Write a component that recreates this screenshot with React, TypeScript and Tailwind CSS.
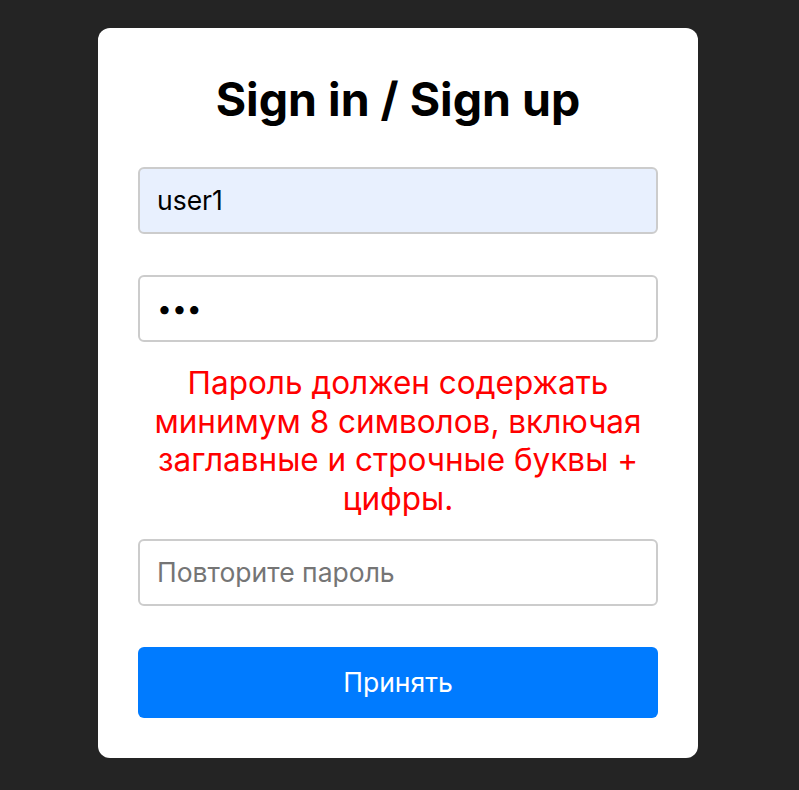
export default function App() {
  return (
    <div className="min-h-[790px] w-full bg-[#242424] pt-[28px] pr-[3px] flex justify-center" style={{ fontFamily: "Inter, 'Noto Sans', sans-serif" }}>
      <div className="w-[600px] h-[730px] bg-white rounded-[12px] px-[40px] pt-[40px] flex flex-col">
        <h1 className="text-[46.5px] leading-[62px] font-bold text-black text-center">Sign in / Sign up</h1>
        <div className="mt-[37px] h-[67px] rounded-[6px] border-2 border-[#cccccc] bg-[#e8f0fe] flex items-center px-[17px] text-[26.5px] text-black">user1</div>
        <div className="mt-[41px] h-[67px] rounded-[6px] border-2 border-[#cccccc] bg-white flex items-center px-[17px] text-[26.5px] text-black">•••</div>
        <p className="mt-[22px] text-[31.5px] leading-[38.5px] text-[#ff0000] text-center">
          Пароль должен содержать минимум 8 символов, включая заглавные и строчные буквы + цифры.
        </p>
        <div className="mt-[21px] h-[67px] rounded-[6px] border-2 border-[#cccccc] bg-white flex items-center px-[17px] text-[26.5px] text-[#757575]">Повторите пароль</div>
        <div className="mt-[41px] h-[71px] rounded-[6px] bg-[#007bff] flex items-center justify-center text-[26.5px] text-white">Принять</div>
      </div>
    </div>
  );
}
